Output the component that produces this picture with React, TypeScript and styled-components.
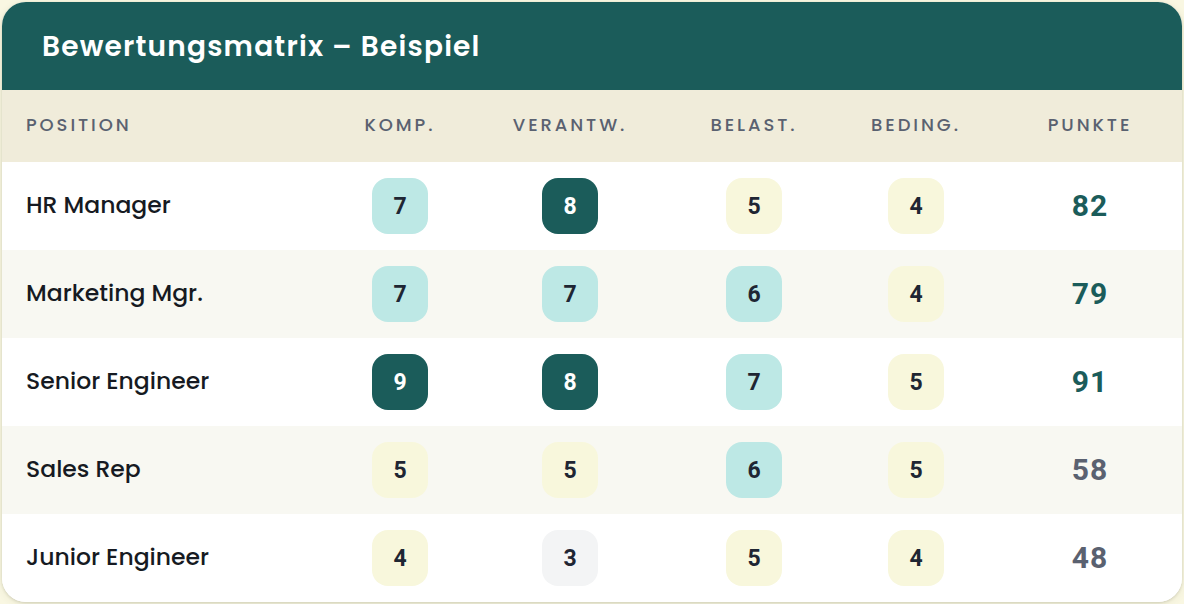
import React from "react";
import styled, { createGlobalStyle } from "styled-components";

const Global = createGlobalStyle`
  html, body { margin: 0; padding: 0; }
  body {
    background: #f9f7e2;
    font-family: "Poppins", "Noto Sans", "Liberation Sans", sans-serif;
  }
`;

const Page = styled.div`
  padding: 2px;
  width: 1184px;
  height: 604px;
  box-sizing: border-box;
`;

const Card = styled.div`
  width: 1180px;
  height: 600px;
  border-radius: 24px;
  overflow: hidden;
  background: #ffffff;
  box-shadow: 0 1px 3px rgba(60, 60, 30, 0.18), 0 2px 8px rgba(60, 60, 30, 0.08);
  display: flex;
  flex-direction: column;
`;

const Header = styled.div`
  height: 88px;
  background: #1b5c5a;
  display: flex;
  align-items: center;
  padding-left: 40px;
  box-sizing: border-box;
`;

const Title = styled.h1`
  margin: 0;
  color: #ffffff;
  font-size: 28px;
  font-weight: 600;
  letter-spacing: 1.2px;
  line-height: 1;
  padding-top: 2px;
`;

const Grid = styled.div`
  display: grid;
  grid-template-columns: 332px 132px 208px 160px 164px 184px;
`;

const HeadRow = styled(Grid)`
  height: 72px;
  background: #f0ecda;
  align-items: center;
`;

const HeadCell = styled.div<{ $left?: boolean }>`
  text-align: ${(p) => (p.$left ? "left" : "center")};
  padding-left: ${(p) => (p.$left ? "24px" : "0")};
  padding-bottom: 3px;
  font-size: 18px;
  font-weight: 500;
  letter-spacing: 2.9px;
  color: #5a6170;
`;

const Row = styled(Grid)<{ $alt: boolean }>`
  height: 88px;
  align-items: center;
  background: ${(p) => (p.$alt ? "#f8f8f2" : "#ffffff")};
`;

const Name = styled.div`
  padding-left: 24px;
  padding-bottom: 4px;
  font-size: 23.5px;
  font-weight: 500;
  color: #161a22;
`;

const Cell = styled.div`
  display: flex;
  justify-content: center;
`;

type Tone = "dark" | "teal" | "yellow" | "gray";

const toneBg: Record<Tone, string> = {
  dark: "#1b5c5a",
  teal: "#bde8e5",
  yellow: "#f8f7dc",
  gray: "#f3f4f5",
};

const Badge = styled.div<{ $tone: Tone }>`
  width: 56px;
  height: 56px;
  border-radius: 16px;
  display: flex;
  align-items: center;
  justify-content: center;
  background: ${(p) => toneBg[p.$tone]};
  color: ${(p) => (p.$tone === "dark" ? "#ffffff" : "#1f2633")};
  font-family: "Roboto", "Liberation Sans", sans-serif;
  font-size: 23px;
  font-weight: 700;
`;

const Points = styled.div<{ $high: boolean }>`
  text-align: center;
  padding-bottom: 2px;
  font-family: "Roboto", "Liberation Sans", sans-serif;
  font-size: 30px;
  font-weight: 700;
  letter-spacing: 1px;
  color: ${(p) => (p.$high ? "#1b5c5a" : "#5a6170")};
`;

const rows = [
  { name: "HR Manager", vals: [7, 8, 5, 4], pts: 82, tones: ["teal", "dark", "yellow", "yellow"] },
  { name: "Marketing Mgr.", vals: [7, 7, 6, 4], pts: 79, tones: ["teal", "teal", "teal", "yellow"] },
  { name: "Senior Engineer", vals: [9, 8, 7, 5], pts: 91, tones: ["dark", "dark", "teal", "yellow"] },
  { name: "Sales Rep", vals: [5, 5, 6, 5], pts: 58, tones: ["yellow", "yellow", "teal", "yellow"] },
  { name: "Junior Engineer", vals: [4, 3, 5, 4], pts: 48, tones: ["yellow", "gray", "yellow", "yellow"] },
] as { name: string; vals: number[]; pts: number; tones: Tone[] }[];

export default function App() {
  return (
    <>
      <Global />
      <Page>
        <Card>
          <Header>
            <Title>Bewertungsmatrix – Beispiel</Title>
          </Header>
          <HeadRow>
            <HeadCell $left>POSITION</HeadCell>
            <HeadCell>KOMP.</HeadCell>
            <HeadCell>VERANTW.</HeadCell>
            <HeadCell>BELAST.</HeadCell>
            <HeadCell>BEDING.</HeadCell>
            <HeadCell>PUNKTE</HeadCell>
          </HeadRow>
          {rows.map((r, i) => (
            <Row key={r.name} $alt={i % 2 === 1}>
              <Name>{r.name}</Name>
              {r.vals.map((v, j) => (
                <Cell key={j}>
                  <Badge $tone={r.tones[j]}>{v}</Badge>
                </Cell>
              ))}
              <Points $high={r.pts >= 70}>{r.pts}</Points>
            </Row>
          ))}
        </Card>
      </Page>
    </>
  );
}
